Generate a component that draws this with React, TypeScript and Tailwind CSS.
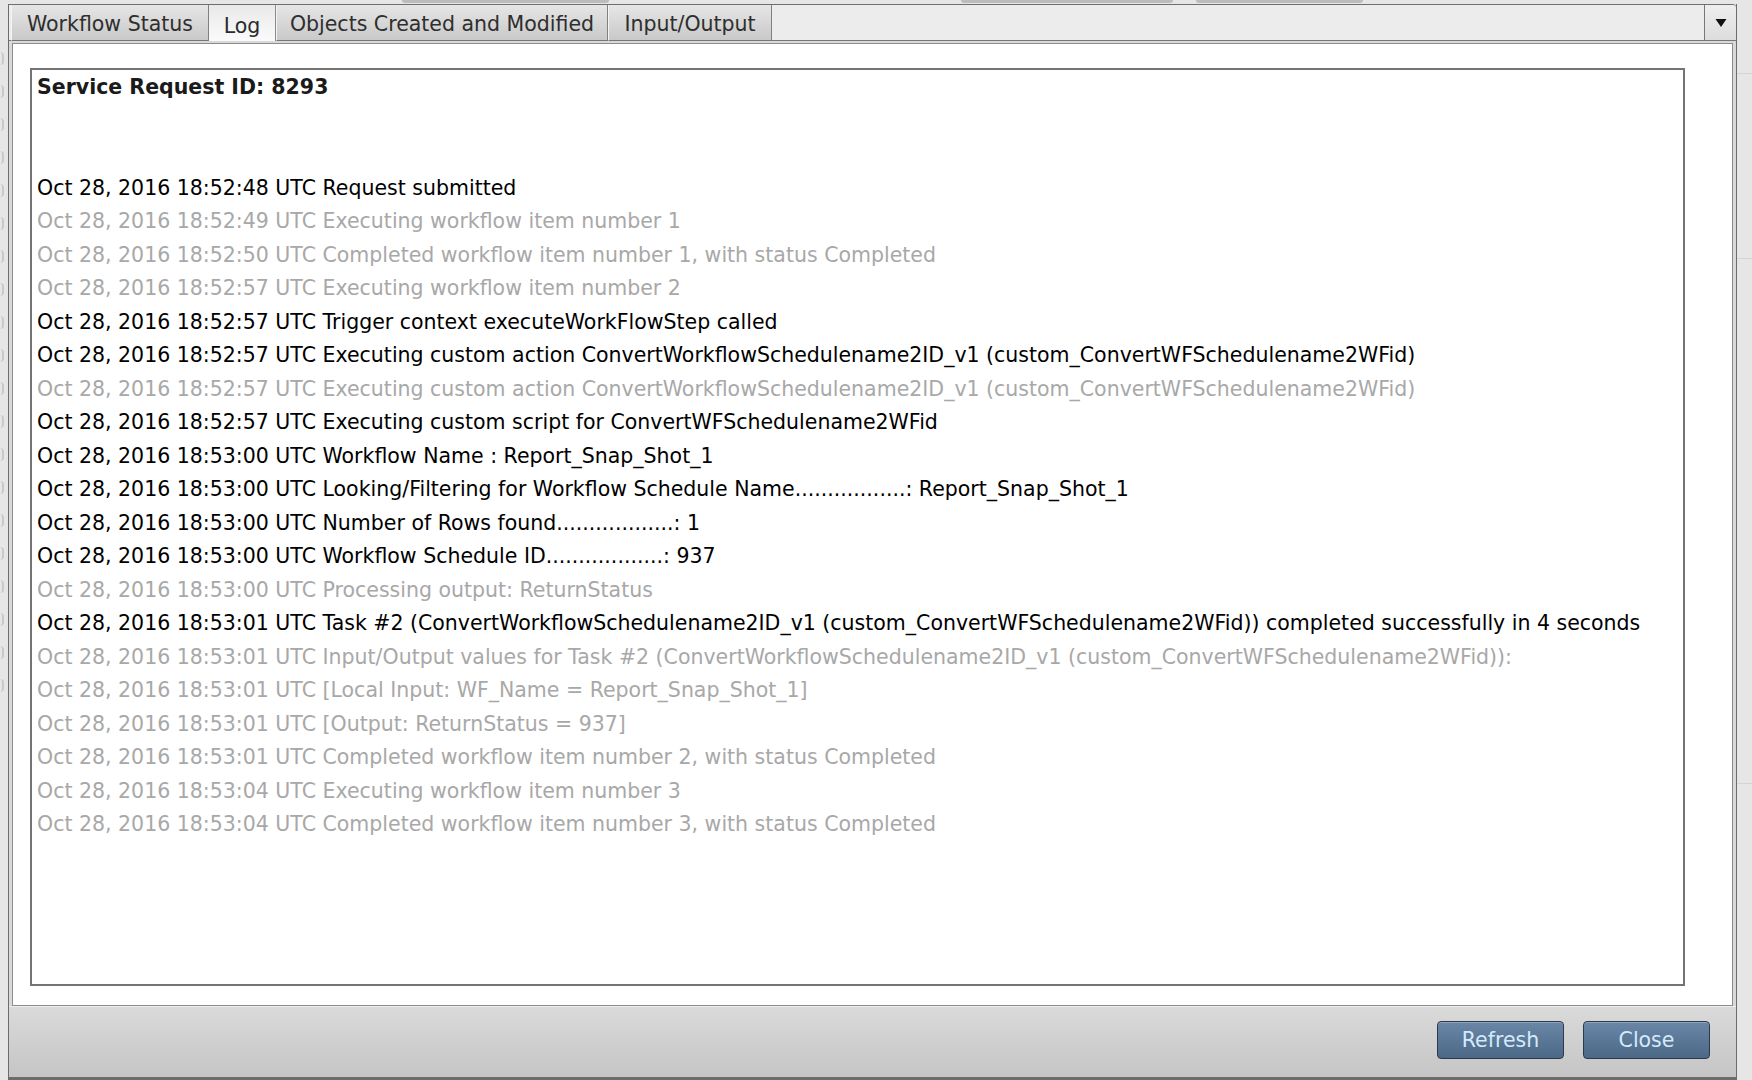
import React from 'react';

const logLines: { text: string; dark: boolean }[] = [
  { text: 'Oct 28, 2016 18:52:48 UTC Request submitted', dark: true },
  { text: 'Oct 28, 2016 18:52:49 UTC Executing workflow item number 1', dark: false },
  { text: 'Oct 28, 2016 18:52:50 UTC Completed workflow item number 1, with status Completed', dark: false },
  { text: 'Oct 28, 2016 18:52:57 UTC Executing workflow item number 2', dark: false },
  { text: 'Oct 28, 2016 18:52:57 UTC Trigger context executeWorkFlowStep called', dark: true },
  { text: 'Oct 28, 2016 18:52:57 UTC Executing custom action ConvertWorkflowSchedulename2ID_v1 (custom_ConvertWFSchedulename2WFid)', dark: true },
  { text: 'Oct 28, 2016 18:52:57 UTC Executing custom action ConvertWorkflowSchedulename2ID_v1 (custom_ConvertWFSchedulename2WFid)', dark: false },
  { text: 'Oct 28, 2016 18:52:57 UTC Executing custom script for ConvertWFSchedulename2WFid', dark: true },
  { text: 'Oct 28, 2016 18:53:00 UTC Workflow Name : Report_Snap_Shot_1', dark: true },
  { text: 'Oct 28, 2016 18:53:00 UTC Looking/Filtering for Workflow Schedule Name.................: Report_Snap_Shot_1', dark: true },
  { text: 'Oct 28, 2016 18:53:00 UTC Number of Rows found..................: 1', dark: true },
  { text: 'Oct 28, 2016 18:53:00 UTC Workflow Schedule ID..................: 937', dark: true },
  { text: 'Oct 28, 2016 18:53:00 UTC Processing output: ReturnStatus', dark: false },
  { text: 'Oct 28, 2016 18:53:01 UTC Task #2 (ConvertWorkflowSchedulename2ID_v1 (custom_ConvertWFSchedulename2WFid)) completed successfully in 4 seconds', dark: true },
  { text: 'Oct 28, 2016 18:53:01 UTC Input/Output values for Task #2 (ConvertWorkflowSchedulename2ID_v1 (custom_ConvertWFSchedulename2WFid)):', dark: false },
  { text: 'Oct 28, 2016 18:53:01 UTC [Local Input: WF_Name = Report_Snap_Shot_1]', dark: false },
  { text: 'Oct 28, 2016 18:53:01 UTC [Output: ReturnStatus = 937]', dark: false },
  { text: 'Oct 28, 2016 18:53:01 UTC Completed workflow item number 2, with status Completed', dark: false },
  { text: 'Oct 28, 2016 18:53:04 UTC Executing workflow item number 3', dark: false },
  { text: 'Oct 28, 2016 18:53:04 UTC Completed workflow item number 3, with status Completed', dark: false },
];

const tabs = [
  { label: 'Workflow Status', width: 'w-[198px]', active: false },
  { label: 'Log', width: 'w-[67px]', active: true },
  { label: 'Objects Created and Modified', width: 'w-[332px]', active: false },
  { label: 'Input/Output', width: 'w-[164px]', active: false },
];

function FooterButton({ label }: { label: string }) {
  return (
    <button className="w-[127px] h-[38px] rounded-[4px] border border-[#2c3a4b] bg-gradient-to-b from-[#6b87a7] to-[#4c6887] text-[#d4eafb] text-[20.5px] shadow-[inset_0_1px_0_rgba(255,255,255,0.25)]">
      {label}
    </button>
  );
}

export default function App() {
  return (
    <div
      className="w-[1752px] h-[1080px] bg-[#e6e6e6] flex overflow-hidden"
      style={{ fontFamily: '"DejaVu Sans", Verdana, sans-serif' }}
    >
      {/* page behind the dialog, left edge */}
      <div className="w-[8px] shrink-0 flex flex-col pt-[52px] gap-[20px] overflow-hidden">
        {Array.from({ length: 20 }).map((_, i) => (
          <div key={i} className="w-[4px] h-[13px] rounded-r-full border-r-2 border-[#c8c8c8]" />
        ))}
      </div>

      {/* dialog */}
      <div className="w-[1729px] shrink-0 flex flex-col">
        {/* strip of background tabs above */}
        <div className="h-[4px] flex shrink-0">
          <div className="w-[394px]" />
          <div className="w-[207px] h-[3px] bg-[#bcbcbc] rounded-b-[3px]" />
          <div className="w-[352px]" />
          <div className="w-[212px] h-[3px] bg-[#bcbcbc] rounded-b-[3px]" />
          <div className="w-[23px]" />
          <div className="w-[167px] h-[3px] bg-[#bcbcbc] rounded-b-[3px]" />
        </div>

        <div className="flex-1 flex flex-col border-l border-r border-b-[3px] border-[#6c6c6c] bg-[#d9d9d9]">
          {/* tab bar */}
          <div className="h-[37px] shrink-0 flex border-t border-[#6e6e6e] bg-[#ececec] rounded-tr-[4px]">
            <div className="w-[2px] border-b border-[#777]" />
            {tabs.map((t) => (
              <div
                key={t.label}
                className={
                  t.active
                    ? `${t.width} shrink-0 flex items-center justify-center pt-[6px] text-[20.5px] text-[#2a2a2a] bg-gradient-to-b from-[#e9e9e9] to-[#fbfbfb] border-r border-[#8a8a8a]`
                    : `${t.width} shrink-0 flex items-center justify-center pt-[3px] text-[20.5px] text-[#2e2e2e] bg-gradient-to-b from-[#e6e6e6] to-[#c9c9c9] border-r border-l border-b border-l-[#f4f4f4] border-r-[#808080] border-b-[#777]`
                }
              >
                {t.label}
              </div>
            ))}
            <div className="flex-1 border-b border-[#777]" />
            <div className="w-[32px] shrink-0 flex items-center justify-center border-l border-b border-[#777] bg-gradient-to-b from-[#eeeeee] to-[#dddddd] rounded-tr-[4px]">
              <svg width="12" height="10" viewBox="0 0 12 10">
                <path d="M0.5 1 L11.5 1 L6 9 Z" fill="#111" />
              </svg>
            </div>
          </div>

          {/* content panel */}
          <div className="flex-1 mx-[3px] mt-[2px] flex flex-col bg-white border border-[#8c8c8c] pl-[17px] pr-[47px] pt-[24px] pb-[19px]">
            <div className="flex-1 border-2 border-[#747474] pl-[5px] pt-[1px] text-[20.5px] leading-[33.5px]">
              <div className="font-bold text-[#1a1a1a]">Service Request ID: 8293</div>
              <div className="h-[67px]" />
              {logLines.map((l, i) => (
                <div key={i} className={l.dark ? 'text-black whitespace-nowrap' : 'text-[#a8a8a8] whitespace-nowrap'}>
                  {l.text}
                </div>
              ))}
            </div>
          </div>

          {/* footer */}
          <div className="h-[71px] shrink-0 flex items-center justify-end gap-[19px] pr-[26px] pb-[4px] border-t border-[#eeeeee] bg-gradient-to-b from-[#dadada] to-[#c5c5c5]">
            <FooterButton label="Refresh" />
            <FooterButton label="Close" />
          </div>
        </div>
      </div>

      {/* page behind the dialog, right edge */}
      <div className="flex-1 flex flex-col">
        <div className="h-[74px] border-b border-[#d4d4d4]" />
        <div className="h-[185px] border-b border-[#d4d4d4]" />
        <div className="h-[525px] border-b border-[#d4d4d4]" />
      </div>
    </div>
  );
}
